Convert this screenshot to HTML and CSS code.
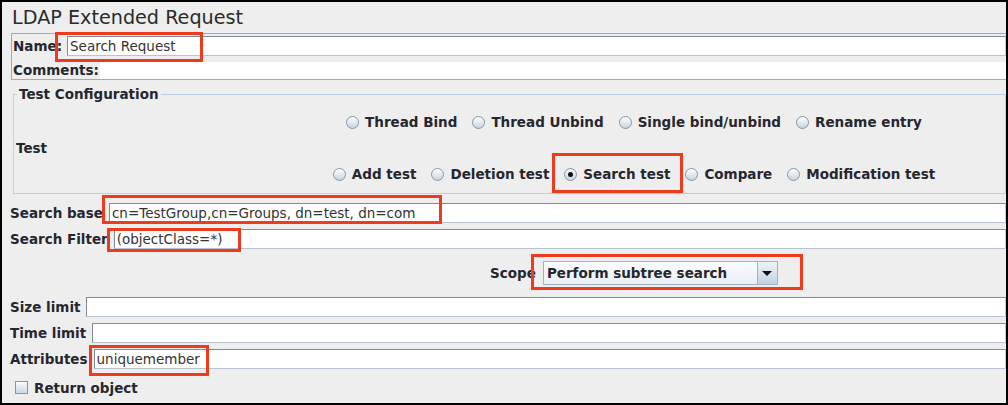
FILE: index.html
```html
<!DOCTYPE html>
<html>
<head>
<meta charset="utf-8">
<link rel="stylesheet" href="styles.css">
</head>
<body>
<div class="frame">
  <div class="title">LDAP Extended Request</div>

  <div class="namepanel">
    <div class="nrow"><span class="lbl">Name:</span><div class="field name-field">Search Request</div></div>
    <div class="crow"><span class="lbl clbl">Comments:</span><div class="comments"></div></div>
  </div>

  <fieldset class="config">
    <legend>Test Configuration</legend>
    <div class="config-grid">
      <div class="test-lbl lbl">Test</div>
      <div class="radio-col">
        <div class="radio-row">
          <div class="radio"><span class="dot"></span><span class="lbl">Thread Bind</span></div>
          <div class="radio"><span class="dot"></span><span class="lbl">Thread Unbind</span></div>
          <div class="radio"><span class="dot"></span><span class="lbl">Single bind/unbind</span></div>
          <div class="radio"><span class="dot"></span><span class="lbl">Rename entry</span></div>
        </div>
        <div class="radio-row">
          <div class="radio"><span class="dot"></span><span class="lbl">Add test</span></div>
          <div class="radio"><span class="dot"></span><span class="lbl">Deletion test</span></div>
          <div class="radio on"><span class="dot"></span><span class="lbl">Search test</span></div>
          <div class="radio"><span class="dot"></span><span class="lbl">Compare</span></div>
          <div class="radio"><span class="dot"></span><span class="lbl">Modification test</span></div>
        </div>
      </div>
    </div>
  </fieldset>

  <div class="row first"><span class="lbl">Search base</span><div class="field">cn=TestGroup,cn=Groups, dn=test, dn=com</div></div>
  <div class="row"><span class="lbl">Search Filter</span><div class="field">(objectClass=*)</div></div>

  <div class="scope-row">
    <span class="lbl">Scope</span>
    <div class="combo">
      <div class="combo-text lbl">Perform subtree search</div>
      <div class="combo-btn"><span class="tri"></span></div>
    </div>
  </div>

  <div class="row"><span class="lbl">Size limit</span><div class="field"></div></div>
  <div class="row"><span class="lbl">Time limit</span><div class="field"></div></div>
  <div class="row"><span class="lbl">Attributes</span><div class="field">uniquemember</div></div>

  <div class="check-row"><span class="check"></span><span class="lbl">Return object</span></div>

  <div class="mark m-name"></div>
  <div class="mark m-search"></div>
  <div class="mark m-base"></div>
  <div class="mark m-filter"></div>
  <div class="mark m-scope"></div>
  <div class="mark m-attr"></div>
</div>
</body>
</html>
```

FILE: styles.css
```css
body {
  margin: 0;
  background: #ffffff;
  font-family: "DejaVu Sans", sans-serif;
}

.frame {
  position: relative;
  width: 1008px;
  height: 405px;
  box-sizing: border-box;
  border: 2px solid #000;
  background: #eeeeee;
  color: #26262e;
  overflow: hidden;
}

.title {
  height: 31px;
  box-sizing: border-box;
  padding: 1px 0 0 10px;
  font-size: 19.2px;
  line-height: 30px;
  color: #2b2b2b;
}

.lbl {
  font-weight: bold;
  font-size: 13.5px;
  white-space: nowrap;
}

/* Name / comments panel */
.namepanel {
  margin-left: 9px;
  border: 1px solid #a9a9a9;
  border-right: none;
}

.nrow {
  height: 24px;
  display: flex;
  align-items: center;
  padding-left: 1px;
  gap: 5px;
}

.crow {
  height: 21px;
  display: flex;
  align-items: flex-end;
  padding-left: 1px;
}

.clbl {
  line-height: 17px;
}

.comments {
  flex: 1;
  height: 17px;
  margin-left: 1px;
  background: #ffffff;
}

/* text field */
.field {
  flex: 1;
  height: 20px;
  box-sizing: border-box;
  border: 1px solid;
  border-color: #7d8c9b #c2cbd4 #b8c3ce #7d8c9b;
  background: #ffffff;
  padding-left: 2px;
  font-size: 13.5px;
  line-height: 18px;
  color: #333333;
  white-space: nowrap;
  overflow: hidden;
}

/* Test configuration */
.config {
  margin: 6px 0 0 11px;
  padding: 0;
  border: 1px solid #b8cfe5;
  min-inline-size: 0;
}

.config legend {
  margin-left: 3px;
  padding: 0 2px;
  font-weight: bold;
  font-size: 13.5px;
  line-height: 16px;
}

.config-grid {
  height: 91px;
  display: grid;
  grid-template-columns: 40px 1fr;
}

.test-lbl {
  align-self: center;
  padding-left: 2px;
}

.radio-col {
  padding: 7px 0 6px 209px;
  display: flex;
  flex-direction: column;
  gap: 26px;
}

.radio-row {
  height: 26px;
  display: flex;
  justify-content: center;
  align-items: center;
  gap: 15px;
}

.radio {
  display: flex;
  align-items: center;
}

.dot {
  width: 13px;
  height: 13px;
  box-sizing: border-box;
  border-radius: 50%;
  border: 1px solid #8795a4;
  background: linear-gradient(#ffffff, #c6d3e0);
  margin-right: 6px;
  display: flex;
  align-items: center;
  justify-content: center;
}

.radio.on .dot::after {
  content: "";
  width: 5px;
  height: 5px;
  border-radius: 50%;
  background: #111111;
}

/* labelled rows */
.row {
  height: 26px;
  display: flex;
  align-items: center;
  padding-left: 8px;
  gap: 6px;
}

.row.first {
  margin-top: 6px;
}

.scope-row {
  height: 42px;
  display: flex;
  justify-content: center;
  align-items: center;
  padding-left: 260px;
  gap: 7px;
}

.combo {
  display: flex;
  width: 235px;
  height: 24px;
  box-sizing: border-box;
  border: 1px solid #9fb2c6;
}

.combo-text {
  flex: 1;
  padding-left: 3px;
  line-height: 22px;
  background: linear-gradient(#fbfcfe, #e9eff5);
  border-right: 1px solid #9fb2c6;
}

.combo-btn {
  width: 19px;
  display: flex;
  align-items: center;
  justify-content: center;
  background: linear-gradient(#eef3f8, #c3d2e1);
}

.tri {
  width: 0;
  height: 0;
  border-left: 5px solid transparent;
  border-right: 5px solid transparent;
  border-top: 5px solid #111111;
}

.check-row {
  height: 31px;
  display: flex;
  align-items: center;
  padding-left: 13px;
}

.check {
  width: 13px;
  height: 13px;
  box-sizing: border-box;
  border: 1px solid #8795a4;
  background: linear-gradient(#fbfcfd, #cbd7e3);
  margin-right: 6px;
}

/* red annotation boxes over the screenshot */
.mark {
  position: absolute;
  box-sizing: border-box;
  border: 3px solid #ef3b1d;
}

.m-name   { left: 53px;  top: 30px;  width: 148px; height: 30px; }
.m-search { left: 550px; top: 151px; width: 131px; height: 40px; }
.m-base   { left: 100px; top: 193px; width: 340px; height: 29px; }
.m-filter { left: 105px; top: 226px; width: 134px; height: 24px; }
.m-scope  { left: 529px; top: 252px; width: 272px; height: 36px; }
.m-attr   { left: 87px;  top: 343px; width: 120px; height: 31px; }
```
